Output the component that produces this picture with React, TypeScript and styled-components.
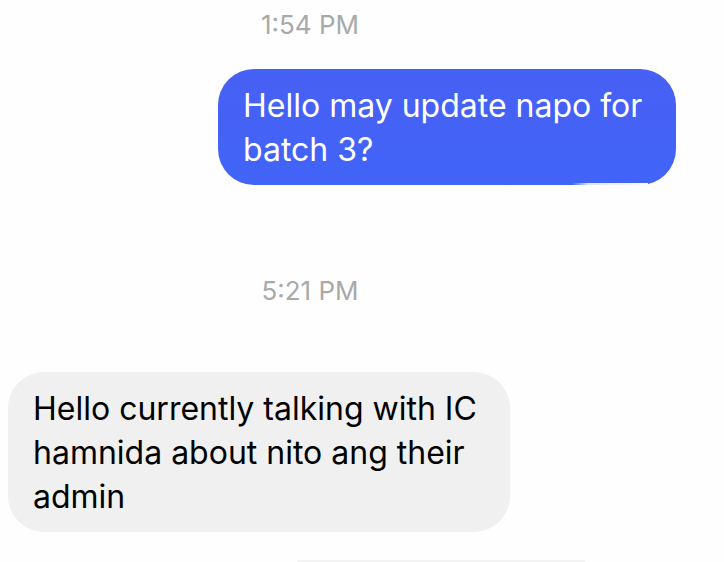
import React from 'react';
import styled, { createGlobalStyle } from 'styled-components';

type BubbleProps = {
    $sent?: boolean;
};

const GlobalStyle = createGlobalStyle`
    * {
        box-sizing: border-box;
    }

    body {
        margin: 0;
        background: #fefefe;
        font-family: Inter, 'Liberation Sans', sans-serif;
    }
`;

const Thread = styled.main`
    display: flex;
    flex-direction: column;
    padding: 8px 48px 0 8px;
`;

const Timestamp = styled.time`
    padding-right: 64px;
    font-size: 26px;
    line-height: 34px;
    text-align: center;
    color: #a9a9a9;
`;

const Bubble = styled.p<BubbleProps>`
    position: relative;
    align-self: ${({ $sent }) => ($sent ? 'flex-end' : 'flex-start')};
    width: ${({ $sent }) => ($sent ? '458px' : '502px')};
    max-width: 100%;
    margin: ${({ $sent }) => ($sent ? '27px 0 89px' : '64px 0 28px')};
    padding: 15px 24px 13px 25px;
    border-radius: 36px;
    font-size: 32px;
    line-height: 44px;
    color: ${({ $sent }) => ($sent ? '#fff' : '#000')};
    background: ${({ $sent }) => ($sent ? 'linear-gradient(#4860f4, #4164f8)' : '#f0f0f0')};
`;

const EdgeFade = styled.span`
    position: absolute;
    right: 28px;
    bottom: 0;
    width: 76px;
    height: 2px;
    background: linear-gradient(to right, transparent, #dfe4fe 16px, #fefefe);
`;

const NextBubbleEdge = styled.div`
    align-self: center;
    width: 288px;
    height: 2px;
    margin-left: 198px;
    border-radius: 8px 8px 0 0;
    background: #f3f3f3;
`;

const App: React.FC = () => {
    return (
        <>
            <GlobalStyle />
            <Thread>
                <Timestamp>1:54 PM</Timestamp>
                <Bubble $sent>
                    Hello may update napo for batch 3?
                    <EdgeFade />
                </Bubble>
                <Timestamp>5:21 PM</Timestamp>
                <Bubble>Hello currently talking with IC hamnida about nito ang their admin</Bubble>
                <NextBubbleEdge />
            </Thread>
        </>
    );
};

export default App;
